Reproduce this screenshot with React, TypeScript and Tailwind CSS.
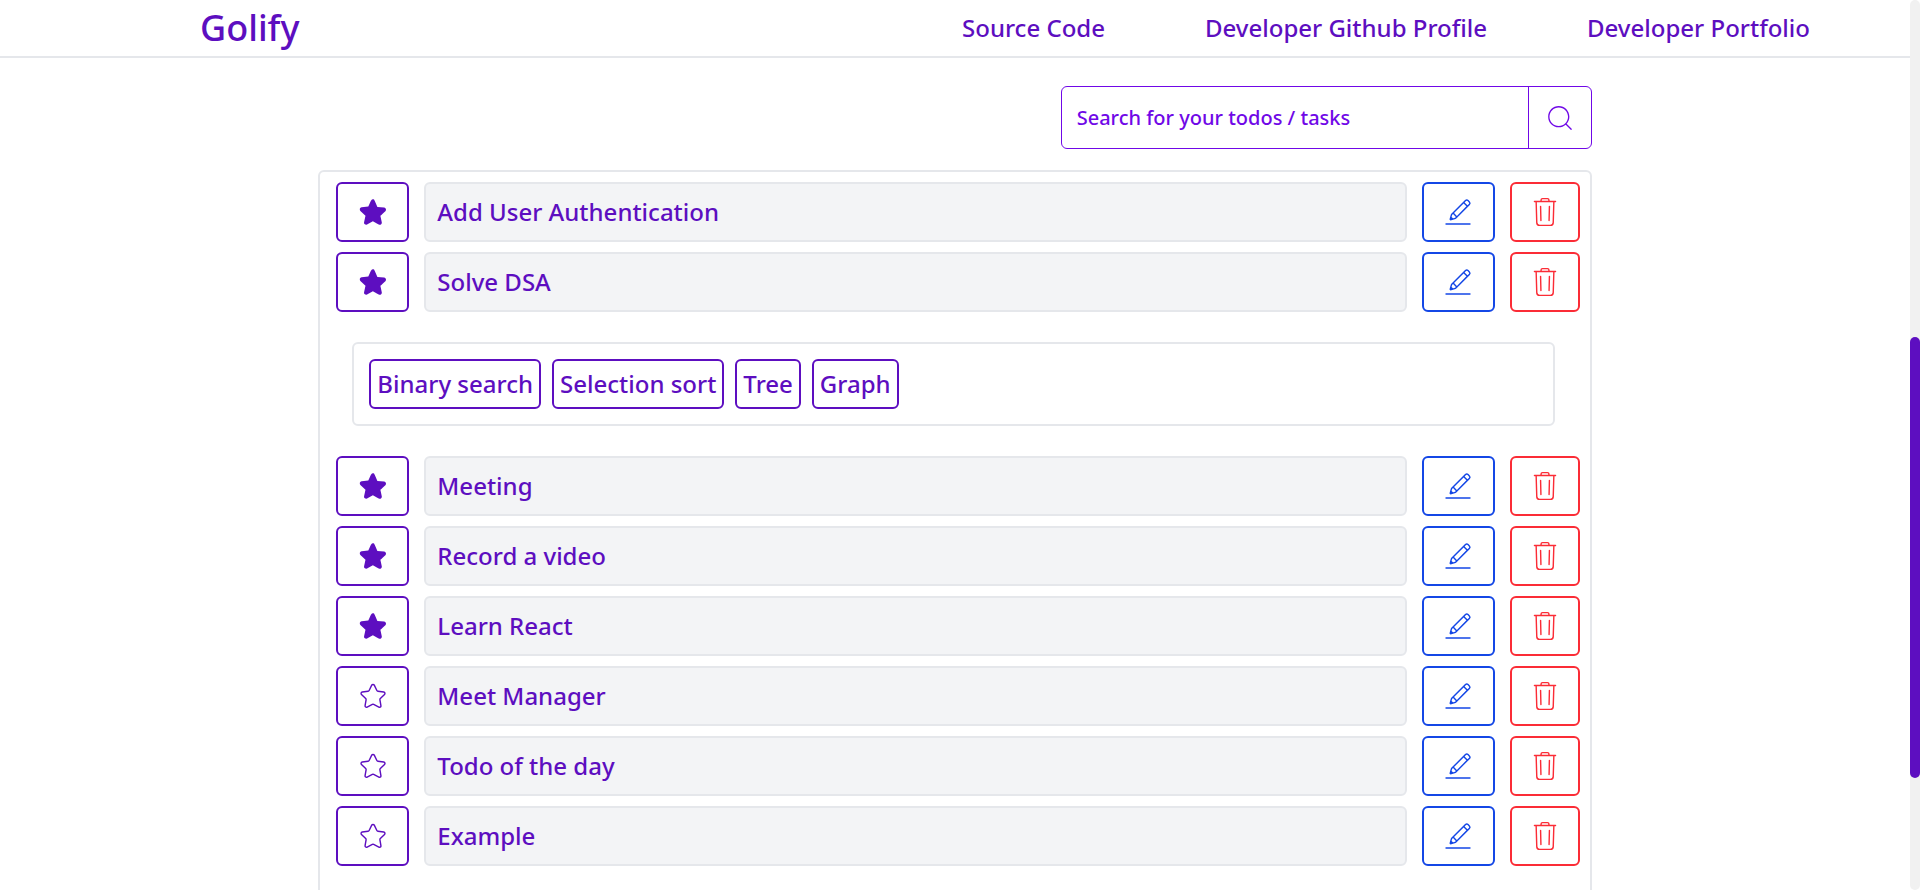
import { CiEdit, CiSearch, CiStar, CiTrash } from "react-icons/ci";
import { TiStarFullOutline } from "react-icons/ti";

const todos = [
  { title: "Add User Authentication", starred: true },
  {
    title: "Solve DSA",
    starred: true,
    subtasks: ["Binary search", "Selection sort", "Tree", "Graph"],
  },
  { title: "Meeting", starred: true },
  { title: "Record a video", starred: true },
  { title: "Learn React", starred: true },
  { title: "Meet Manager", starred: false },
  { title: "Todo of the day", starred: false },
  { title: "Example", starred: false },
];

function TodoRow({ title, starred }: { title: string; starred: boolean }) {
  return (
    <div className="flex h-[60px] gap-[15px]">
      <button className="flex w-[73px] shrink-0 items-center justify-center rounded-md border-2 border-violet-800 text-violet-800">
        {starred ? <TiStarFullOutline className="h-[34px] w-[34px]" /> : <CiStar className="h-[34px] w-[34px]" />}
      </button>
      <div className="flex flex-1 items-center rounded-md border-2 border-gray-200 bg-gray-100 px-[11px] text-[24px] font-medium text-violet-800">
        {title}
      </div>
      <button className="flex w-[73px] shrink-0 items-center justify-center rounded-md border-2 border-blue-700 text-blue-700">
        <CiEdit className="h-[34px] w-[34px]" />
      </button>
      <button className="flex w-[70px] shrink-0 items-center justify-center rounded-md border-2 border-red-500 text-red-500">
        <CiTrash className="h-[34px] w-[34px]" />
      </button>
    </div>
  );
}

export default function App() {
  return (
    <div className="flex h-[890px] overflow-hidden bg-white font-['Noto_Sans',sans-serif]">
      <div className="min-w-0 flex-1">
        <nav className="flex h-[58px] items-center justify-between border-b-2 border-gray-200 pl-[200px] pr-[100px]">
          <a className="text-[36px] font-medium text-violet-800">Golify</a>
          <div className="flex gap-[100px] text-[24px] font-medium text-violet-800">
            <a>Source Code</a>
            <a>Developer Github Profile</a>
            <a>Developer Portfolio</a>
          </div>
        </nav>

        <div className="mx-auto w-2/3">
          <div className="mt-[28px] flex justify-end">
            <div className="flex h-[63px] w-[531px] rounded-md border border-violet-700">
              <div className="flex flex-1 items-center pl-[15px] text-[20px] font-medium text-violet-700">
                Search for your todos / tasks
              </div>
              <button className="flex w-[63px] items-center justify-center border-l border-violet-700 text-violet-700">
                <CiSearch className="h-[32px] w-[32px]" />
              </button>
            </div>
          </div>

          <div className="mt-[21px] flex flex-col gap-[10px] rounded-md border-2 border-gray-200 pb-[60px] pl-[16px] pr-[10px] pt-[10px]">
            {todos.map((todo) => (
              <div key={todo.title} className="flex flex-col gap-[10px]">
                <TodoRow title={todo.title} starred={todo.starred} />
                {todo.subtasks && (
                  <div className="mb-[20px] ml-[16px] mr-[25px] mt-[20px] flex flex-wrap gap-[11px] rounded-md border-2 border-gray-200 p-[15px]">
                    {todo.subtasks.map((sub) => (
                      <span
                        key={sub}
                        className="flex h-[50px] items-center rounded-md border-2 border-violet-800 px-[6px] text-[24px] font-medium text-violet-800"
                      >
                        {sub}
                      </span>
                    ))}
                  </div>
                )}
              </div>
            ))}
          </div>
        </div>
      </div>

      {/* scrollbar */}
      <div className="w-[10px] shrink-0 rounded-[5px] bg-[#f1f1f1]">
        <div className="mt-[337px] h-[441px] rounded-[5px] bg-violet-800" />
      </div>
    </div>
  );
}
